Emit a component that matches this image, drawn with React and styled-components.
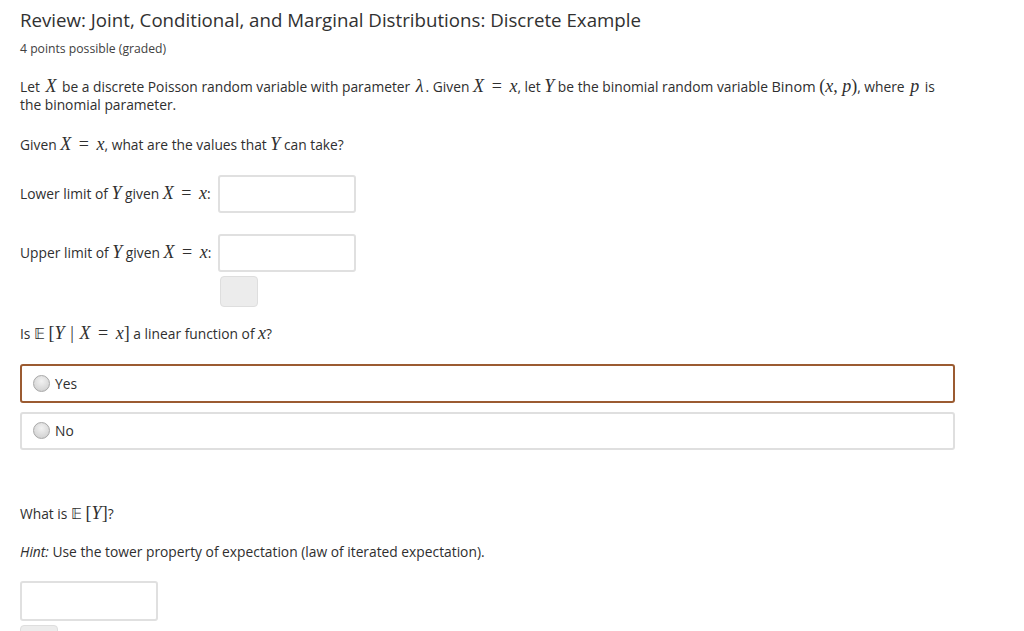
import React from 'react'
import styled, {createGlobalStyle} from 'styled-components'

const GlobalStyle = createGlobalStyle`
  html, body {
    margin: 0;
    padding: 0;
    background: #fff;
  }
  body {
    font-family: "Open Sans", "Liberation Sans", sans-serif;
    color: #2f2f2f;
  }
`

const Page = styled.div`
  padding: 8px 20px 0 20px;
  width: 935px;
`

const Title = styled.h1`
  margin: 0;
  font-size: 18.7px;
  font-weight: 400;
  line-height: 24px;
  color: #313131;
`

const Points = styled.div`
  margin-top: 8px;
  font-size: 12.2px;
  line-height: 18px;
  color: #414141;
`

const Para = styled.p`
  margin: ${p => p.$mt || 20}px 0 0 0;
  font-size: 13.8px;
  line-height: 18px;
`

const M = styled.span`
  font-family: "Liberation Serif", "DejaVu Serif", serif;
  font-style: ${p => (p.$up ? 'normal' : 'italic')};
  font-size: 18px;
  line-height: 0;
  padding: 0 ${p => p.$pad || 0}px;
`

const Sans = styled.span`
  font-size: 14.5px;
  line-height: 0;
`

const BB = styled.span`
  font-family: "DejaVu Sans", sans-serif;
  font-size: 15px;
  font-weight: 300;
  line-height: 0;
`

const FieldRow = styled.div`
  display: flex;
  align-items: center;
  gap: ${p => p.$gap || 0}px;
  margin-top: ${p => p.$mt}px;
  font-size: 13.8px;
  line-height: 18px;
`

const TextInput = styled.input`
  box-sizing: border-box;
  width: 138px;
  height: ${p => p.$h || 38}px;
  border: 2px solid #e0e0e0;
  border-radius: 3px;
  background: #fff;
  outline: none;
`

const Button = styled.div`
  box-sizing: border-box;
  width: 38px;
  height: 31px;
  margin: ${p => p.$mt || 4}px 0 0 ${p => p.$ml || 0}px;
  background: #ececec;
  border: 1px solid #dedede;
  border-radius: 4px;
`

const Choice = styled.label`
  box-sizing: border-box;
  display: flex;
  align-items: center;
  height: ${p => p.$h}px;
  margin-top: ${p => p.$mt}px;
  padding-left: 11px;
  border: 2px solid ${p => (p.$active ? '#9b5b31' : '#dfdfdf')};
  border-radius: 3px;
  font-size: 13.8px;
`

const Radio = styled.span`
  box-sizing: border-box;
  width: 17px;
  height: 17px;
  margin-right: 5px;
  border-radius: 50%;
  border: 1px solid #a8a8a8;
  background: radial-gradient(circle at 50% 35%, #f2f2f2 0%, #d6d6d6 70%, #c6c6c6 100%);
`

const Hint = styled.em`
  font-style: italic;
`

const Eq = () => <M $up $pad={4}>=</M>

export default function App() {
  return (
    <>
      <GlobalStyle/>
      <Page>
        <Title>Review: Joint, Conditional, and Marginal Distributions: Discrete Example</Title>
        <Points>4 points possible (graded)</Points>

        <Para $mt={20}>
          Let <M $pad={2}>X</M> be a discrete Poisson random variable with parameter <M $pad={2}>λ</M>. Given <M>X</M> <Eq/> <M>x</M>, let <M>Y</M> be the binomial random variable <Sans>Binom</Sans> <M $up>(</M><M>x</M><M $up>, </M><M>p</M><M $up>)</M>, where <M $pad={2}>p</M> is the binomial parameter.
        </Para>

        <Para $mt={22}>
          Given <M>X</M> <Eq/> <M>x</M>, what are the values that <M>Y</M> can take?
        </Para>

        <FieldRow $mt={20.5} $gap={7}>
          <span>Lower limit of <M>Y</M> given <M>X</M> <Eq/> <M>x</M>:</span>
          <TextInput/>
        </FieldRow>

        <FieldRow $mt={21.3} $gap={7}>
          <span>Upper limit of <M>Y</M> given <M>X</M> <Eq/> <M>x</M>:</span>
          <TextInput/>
        </FieldRow>
        <Button $ml={200}/>

        <Para $mt={18.7}>
          Is <BB>𝔼</BB> <M $up>[</M><M>Y</M> <M $up $pad={2}>|</M> <M>X</M> <Eq/> <M>x</M><M $up>]</M> a linear function of <M>x</M>?
        </Para>

        <Choice $active $h={39} $mt={20.5}><Radio/>Yes</Choice>
        <Choice $h={38} $mt={9}><Radio/>No</Choice>

        <Para $mt={55}>
          What is <BB>𝔼</BB> <M $up>[</M><M>Y</M><M $up>]</M>?
        </Para>

        <Para $mt={20}>
          <Hint>Hint:</Hint> Use the tower property of expectation (law of iterated expectation).
        </Para>

        <FieldRow $mt={20}>
          <TextInput $h={40}/>
        </FieldRow>
        <Button/>
      </Page>
    </>
  )
}
